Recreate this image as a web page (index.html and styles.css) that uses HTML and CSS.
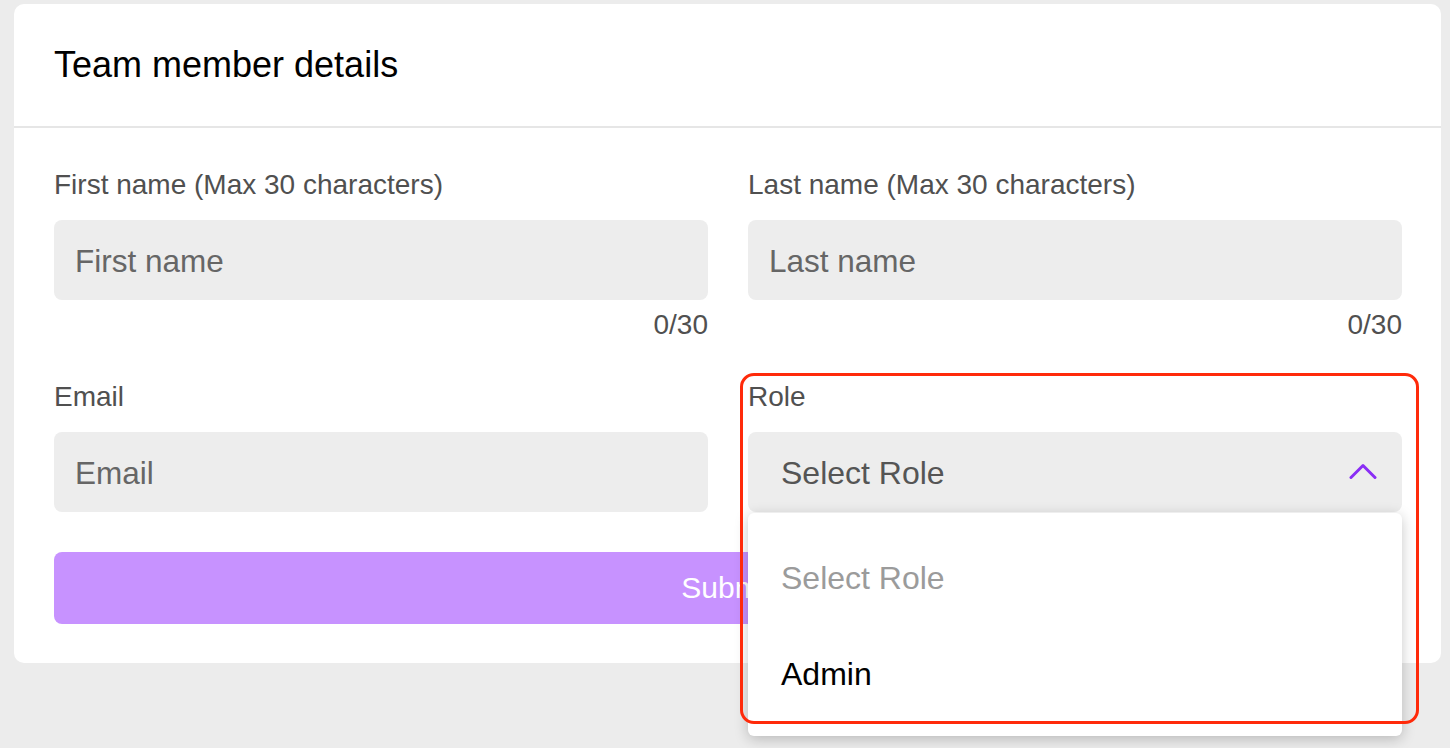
FILE: index.html
```html
<!DOCTYPE html>
<html lang="en">
<head>
    <meta charset="UTF-8">
    <meta name="viewport" content="width=device-width, initial-scale=1.0">
    <title>Team member details</title>
    <link rel="stylesheet" href="styles.css">
</head>
<body>
    <div class="card">
        <div class="card-header">
            <h2>Team member details</h2>
        </div>
        <form class="card-body">
            <div class="field">
                <label class="field-label">First name (Max 30 characters)</label>
                <input class="text-input" type="text" placeholder="First name">
                <div class="counter">0/30</div>
            </div>
            <div class="field">
                <label class="field-label">Last name (Max 30 characters)</label>
                <input class="text-input" type="text" placeholder="Last name">
                <div class="counter">0/30</div>
            </div>
            <div class="field">
                <label class="field-label">Email</label>
                <input class="text-input" type="email" placeholder="Email">
            </div>
            <div class="field role-field">
                <label class="field-label">Role</label>
                <div class="select-box">
                    <span>Select Role</span>
                    <svg class="chevron" width="28" height="16" viewBox="0 0 28 16">
                        <path d="M2 14.5 L14 2.5 L26 14.5" fill="none" stroke="#8a2ef5" stroke-width="3" stroke-linecap="round" stroke-linejoin="round"/>
                    </svg>
                </div>
                <ul class="dropdown">
                    <li class="option muted">Select Role</li>
                    <li class="option">Admin</li>
                </ul>
                <div class="highlight"></div>
            </div>
            <button class="submit-button" type="button">Submit</button>
        </form>
    </div>
</body>
</html>
```

FILE: styles.css
```css
* {
    margin: 0;
    padding: 0;
    box-sizing: border-box;
    font-family: 'Liberation Sans', Arial, sans-serif;
}

body {
    background: #ececec;
    min-height: 100vh;
    overflow: hidden;
}

.card {
    margin: 4px 9px 0 14px;
    background: #fff;
    border-radius: 10px;
}

.card-header {
    height: 124px;
    display: flex;
    align-items: center;
    padding-left: 40px;
    border-bottom: 2px solid #e6e6e6;
}

.card-header h2 {
    font-size: 36px;
    font-weight: 400;
    color: #000;
}

.card-body {
    display: grid;
    grid-template-columns: 1fr 1fr;
    column-gap: 40px;
    row-gap: 40px;
    padding: 41px 39px 39px 40px;
}

.field {
    display: flex;
    flex-direction: column;
}

.field-label {
    font-size: 28px;
    line-height: 32px;
    color: #505050;
    margin-bottom: 19px;
}

.text-input {
    height: 80px;
    border: none;
    outline: none;
    border-radius: 8px;
    background: #ededed;
    padding: 3px 21px 0;
    font-size: 31.5px;
    color: #333;
}

.text-input::placeholder {
    color: #666;
}

.counter {
    margin-top: 9px;
    font-size: 28px;
    line-height: 32px;
    color: #505050;
    text-align: right;
}

.role-field {
    position: relative;
}

.select-box {
    height: 80px;
    border-radius: 8px;
    background: #ededed;
    display: flex;
    align-items: center;
    justify-content: space-between;
    padding: 3px 25px 0 33px;
    font-size: 32px;
    color: #555;
}

.chevron {
    margin-top: -5px;
}

.dropdown {
    position: absolute;
    top: 132px;
    left: 0;
    right: 0;
    list-style: none;
    background: #fff;
    border-radius: 6px;
    padding: 17px 0 14px;
    box-shadow: 0 3px 14px rgba(0, 0, 0, 0.22);
    z-index: 2;
}

.option {
    height: 96px;
    display: flex;
    align-items: center;
    padding-left: 33px;
    font-size: 32px;
    color: #000;
}

.option.muted {
    color: #9b9b9b;
}

.highlight {
    position: absolute;
    top: -8px;
    left: -8px;
    width: 679px;
    height: 351px;
    border: 3.5px solid #ff2a0a;
    border-radius: 14px;
    pointer-events: none;
    z-index: 3;
}

.submit-button {
    grid-column: 1 / -1;
    height: 72px;
    border: none;
    border-radius: 8px;
    background: #c792ff;
    color: #fff;
    font-size: 30px;
    cursor: pointer;
}
```
